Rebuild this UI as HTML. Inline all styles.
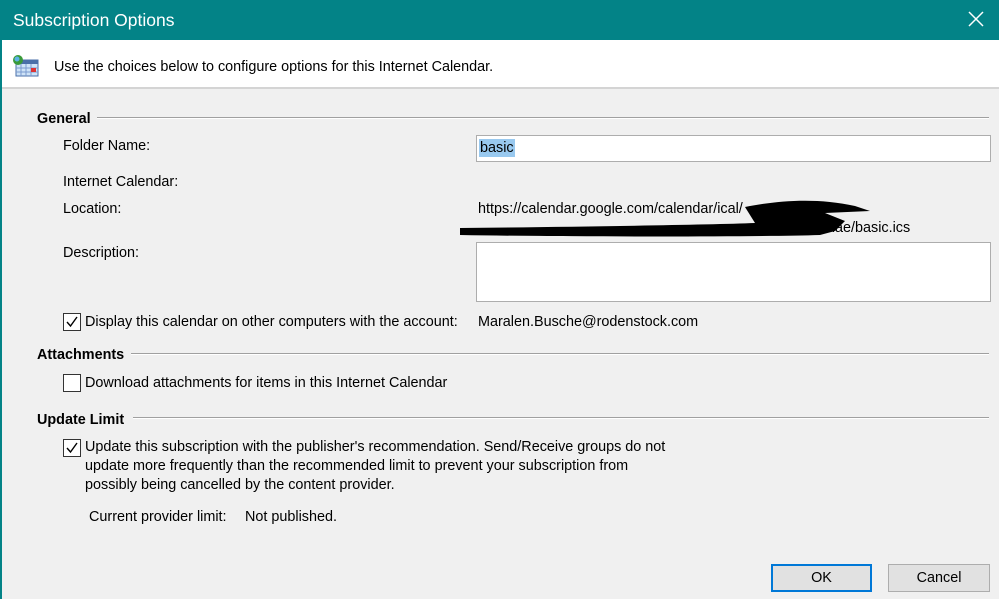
<!DOCTYPE html>
<html><head><style>
body{margin:0;width:999px;height:599px;overflow:hidden;background:#f0f0f0;font-family:"Liberation Sans",sans-serif;font-size:14.4px;color:#000;position:relative}
.a{position:absolute;white-space:nowrap;line-height:18px}
.b{font-weight:bold}
.line{position:absolute;height:1px;background:#a0a0a0;border-bottom:1px solid #fff}
.cb{position:absolute;width:16px;height:16px;border:1px solid #333;background:#fff}
.inp{position:absolute;background:#fff;border:1px solid #adadad}
.btn{position:absolute;background:#e1e1e1;border:1px solid #adadad;text-align:center;line-height:26px;height:26px}
</style></head><body>
<div style="position:absolute;left:0;top:0;width:999px;height:40px;background:#038387"></div>
<div style="position:absolute;left:0;top:40px;width:2px;height:559px;background:#038387"></div>
<div class="a" style="left:13px;top:10px;font-size:17.5px;color:#fff;line-height:20px">Subscription Options</div>
<svg style="position:absolute;left:967px;top:10px" width="18" height="18"><path d="M2 2L16 16M16 2L2 16" stroke="#fff" stroke-width="1.5"/></svg>
<div style="position:absolute;left:2px;top:40px;width:997px;height:47px;background:#fff;border-bottom:2px solid #d4d4d4"></div>
<svg style="position:absolute;left:12px;top:55px" width="28" height="22"><rect x="4" y="5" width="22" height="16" fill="#cfe3f7" stroke="#4a6fa8"/><rect x="4" y="5" width="22" height="4" fill="#4a6fa8"/><path d="M9 9v12M14 9v12M19 9v12M4 13h22M4 17h22" stroke="#7b9bcf"/><rect x="19" y="13" width="5" height="4" fill="#d33"/><circle cx="6" cy="5" r="5" fill="#3a9a3a"/><circle cx="5" cy="4" r="2.5" fill="#5cb3e8"/></svg>
<div class="a" style="left:54px;top:58px">Use the choices below to configure options for this Internet Calendar.</div>

<div class="a b" style="left:37px;top:110px">General</div>
<div class="line" style="left:97px;top:117px;width:892px"></div>
<div class="a" style="left:63px;top:137px">Folder Name:</div>
<div class="inp" style="left:476px;top:135px;width:513px;height:25px"></div>
<div class="a" style="left:479px;top:139px;background:#99c9ef;padding:0 1px">basic</div>
<div class="a" style="left:63px;top:173px">Internet Calendar:</div>
<div class="a" style="left:63px;top:200px">Location:</div>
<div class="a" style="left:478px;top:200px">https://calendar.google.com/calendar/ical/</div>
<div class="a" style="left:827px;top:219px">dae/basic.ics</div>
<svg style="position:absolute;left:455px;top:193px" width="420" height="45"><path d="M290 14C320 8 360 4 400 13 L415 18 L370 20 L390 28 L380 38 L365 42 C300 44 120 44 5 42 L5 35 C100 34 250 32 300 30 Z" fill="#000"/></svg>
<div class="a" style="left:63px;top:244px">Description:</div>
<div class="inp" style="left:476px;top:242px;width:513px;height:58px"></div>
<div class="cb" style="left:63px;top:313px"></div>
<svg style="position:absolute;left:65px;top:315px" width="14" height="14"><path d="M2 7l3.5 4L12 2" stroke="#000" stroke-width="1.4" fill="none"/></svg>
<div class="a" style="left:85px;top:313px">Display this calendar on other computers with the account:</div>
<div class="a" style="left:478px;top:313px">Maralen.Busche@rodenstock.com</div>

<div class="a b" style="left:37px;top:346px">Attachments</div>
<div class="line" style="left:131px;top:353px;width:858px"></div>
<div class="cb" style="left:63px;top:374px"></div>
<div class="a" style="left:85px;top:374px">Download attachments for items in this Internet Calendar</div>

<div class="a b" style="left:37px;top:411px">Update Limit</div>
<div class="line" style="left:133px;top:417px;width:856px"></div>
<div class="cb" style="left:63px;top:439px"></div>
<svg style="position:absolute;left:65px;top:441px" width="14" height="14"><path d="M2 7l3.5 4L12 2" stroke="#000" stroke-width="1.4" fill="none"/></svg>
<div class="a" style="left:85px;top:438px;line-height:19px">Update this subscription with the publisher's recommendation. Send/Receive groups do not<br>update more frequently than the recommended limit to prevent your subscription from<br>possibly being cancelled by the content provider.</div>
<div class="a" style="left:89px;top:508px">Current provider limit:</div>
<div class="a" style="left:245px;top:508px">Not published.</div>

<div class="btn" style="left:771px;top:564px;width:99px;border:1px solid #0078d7;box-shadow:inset 0 0 0 1px #0078d7">OK</div>
<div class="btn" style="left:888px;top:564px;width:100px">Cancel</div>
</body></html>
